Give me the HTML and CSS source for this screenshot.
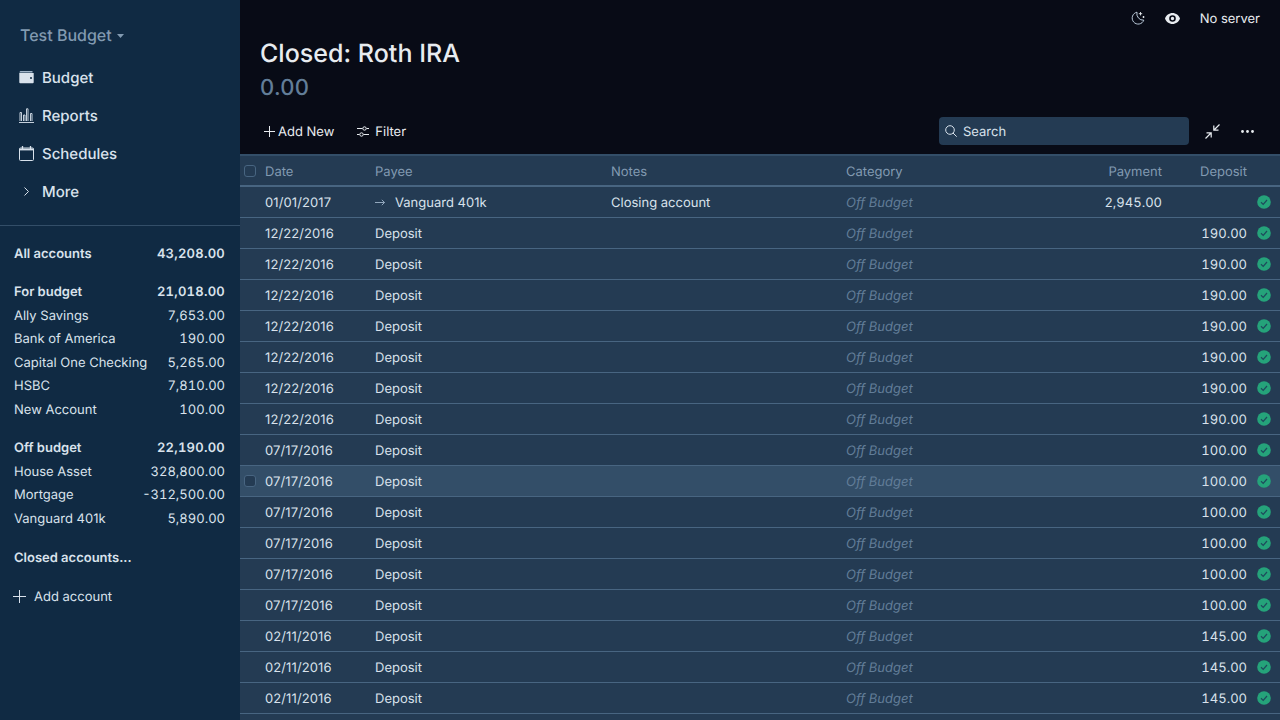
FILE: index.html
```html
<!DOCTYPE html>
<html lang="en">
<head>
<meta charset="utf-8">
<title>Closed: Roth IRA</title>
<link rel="stylesheet" href="styles.css">
</head>
<body>
<svg class="defs" width="0" height="0"><symbol id="ok" viewBox="0 0 14 14"><circle cx="7" cy="7" r="6.800" fill="#25a37a"/><path d="M4 7.300l2.200 2.100 3.800-4.400" fill="none" stroke="#1f4a5c" stroke-width="1.200"/></symbol></svg>
<div class="app">
  <aside class="sidebar">
    <div class="budget-name">Test Budget <svg class="caret" width="7" height="4" viewBox="0 0 7 4"><path d="M0 0h7L3.500 4z" fill="currentColor"/></svg></div>
    <nav class="nav">
      <div class="nav-item"><span class="nav-icon"><svg width="15" height="15" viewBox="0 0 15 15"><path d="M1.800 1h11.700v1.400H.5C.6 1.600 1.100 1 1.800 1z" fill="#9fb3c8"/><path d="M.3 3h14.400v9.300a.9.900 0 0 1-.9.900H1.200a.9.900 0 0 1-.9-.9z" fill="currentColor"/><circle cx="12" cy="8" r="1" fill="#102a43"/></svg></span>Budget</div>
      <div class="nav-item"><span class="nav-icon"><svg width="15" height="15" viewBox="0 0 15 15" fill="none" stroke="currentColor" stroke-width=".9"><path d="M0 14.500h15"/><path d="M1 13V4.500h1.500V13M4.500 13V7h1.500v6M7.500 13V.8H9V13M11.500 13V5.500H13V13" stroke-width=".9"/></svg></span>Reports</div>
      <div class="nav-item"><span class="nav-icon"><svg width="15" height="15" viewBox="0 0 15 15" fill="none" stroke="currentColor" stroke-width="1"><rect x=".5" y="2" width="14" height="12.500" rx="1"/><path d="M.5 3.500h14" stroke-width="1.800"/><path d="M3.500 0v3M11.500 0v3" stroke-width="1.300"/></svg></span>Schedules</div>
      <div class="nav-item"><span class="nav-icon"><svg width="15" height="15" viewBox="0 0 15 15" fill="none" stroke="currentColor" stroke-width="1"><path d="M5.500 3.500l4 4-4 4"/></svg></span>More</div>
    </nav>
    <div class="accounts">
      <div class="acct bold"><span>All accounts</span><span class="amt">43,208.00</span></div>
      <div class="group">
        <div class="acct bold"><span>For budget</span><span class="amt">21,018.00</span></div>
        <div class="acct"><span>Ally Savings</span><span class="amt">7,653.00</span></div>
        <div class="acct"><span>Bank of America</span><span class="amt">190.00</span></div>
        <div class="acct"><span>Capital One Checking</span><span class="amt">5,265.00</span></div>
        <div class="acct"><span>HSBC</span><span class="amt">7,810.00</span></div>
        <div class="acct"><span>New Account</span><span class="amt">100.00</span></div>
      </div>
      <div class="group">
        <div class="acct bold"><span>Off budget</span><span class="amt">22,190.00</span></div>
        <div class="acct"><span>House Asset</span><span class="amt">328,800.00</span></div>
        <div class="acct"><span>Mortgage</span><span class="amt">-312,500.00</span></div>
        <div class="acct"><span>Vanguard 401k</span><span class="amt">5,890.00</span></div>
      </div>
      <div class="group closed"><div class="acct bold"><span>Closed accounts...</span></div></div>
      <div class="add-account"><svg width="13" height="13" viewBox="0 0 13 13" stroke="currentColor" stroke-width="1"><path d="M6.500 0v13M0 6.500h13"/></svg><span>Add account</span></div>
    </div>
  </aside>
  <main class="main">
    <div class="topbar">
      <svg class="moon" width="14" height="14" viewBox="0 0 14 14" fill="none" stroke="currentColor" stroke-width="1"><path d="M6 1.200a6 6 0 1 0 6.800 8A6.500 6.500 0 0 1 6 1.200z"/><path d="M9.500 1v3.400M7.800 2.700h3.400M12.500 5v2M11.500 6h2" stroke="#e8ecf0" stroke-width=".9"/></svg>
      <svg class="eye" width="15" height="11" viewBox="0 0 15 11"><path fill-rule="evenodd" d="M7.500 0C11 0 13.800 2.300 15 5.500 13.800 8.700 11 11 7.500 11S1.200 8.700 0 5.500C1.200 2.300 4 0 7.500 0zm0 2.200a3.300 3.300 0 1 0 0 6.600 3.300 3.300 0 0 0 0-6.600zm0 1.600a1.700 1.700 0 1 1 0 3.400 1.700 1.700 0 0 1 0-3.400z" fill="currentColor"/></svg>
      <span class="server lbl">No server</span>
    </div>
    <header class="head">
      <h1 class="title">Closed: Roth IRA</h1>
      <div class="balance">0.00</div>
    </header>
    <div class="toolbar">
      <div class="tool add"><svg width="11" height="11" viewBox="0 0 11 11" stroke="currentColor" stroke-width="1"><path d="M5.500 0v11M0 5.500h11"/></svg><span class="lbl">Add New</span></div>
      <div class="tool filter"><svg width="12" height="11" viewBox="0 0 12 11" fill="none" stroke="currentColor" stroke-width="1"><path d="M0 2.500h5.500M9.500 2.500H12M0 8.500h2.500M6.500 8.500H12"/><circle cx="7.500" cy="2.500" r="1.700"/><circle cx="4.500" cy="8.500" r="1.700"/></svg><span class="lbl">Filter</span></div>
      <div class="spacer"></div>
      <div class="search"><svg width="12" height="12" viewBox="0 0 12 12" fill="none" stroke="currentColor" stroke-width="1"><circle cx="5" cy="5" r="4.300"/><path d="M8 8l3.700 3.700"/></svg><span class="lbl">Search</span></div>
      <svg class="compress" width="15" height="15" viewBox="0 0 15 15" fill="none" stroke="currentColor" stroke-width="1.200"><path d="M14.500.5L9 6M8.800 1.500v4.700h4.700M.5 14.500L6 9M1.500 8.800h4.700v4.700"/></svg>
      <svg class="dots" width="13" height="3" viewBox="0 0 13 3"><circle cx="1.500" cy="1.500" r="1.400" fill="currentColor"/><circle cx="6.500" cy="1.500" r="1.400" fill="currentColor"/><circle cx="11.500" cy="1.500" r="1.400" fill="currentColor"/></svg>
    </div>
    <div class="table">
      <div class="row header">
        <div class="c-check"><span class="box"></span></div>
        <div class="c-date">Date</div>
        <div class="c-payee">Payee</div>
        <div class="c-notes">Notes</div>
        <div class="c-cat">Category</div>
        <div class="c-pay">Payment</div>
        <div class="c-dep">Deposit</div>
        <div class="c-clr"></div>
      </div>
      <div class="row"><div class="c-check"></div><div class="c-date">01/01/2017</div><div class="c-payee"><svg class="arrow" width="10" height="7" viewBox="0 0 10 7" fill="none" stroke="currentColor" stroke-width=".9"><path d="M0 3.500h9.500M6.800.8l2.700 2.700-2.700 2.700"/></svg>Vanguard 401k</div><div class="c-notes">Closing account</div><div class="c-cat">Off Budget</div><div class="c-pay">2,945.00</div><div class="c-dep"></div><div class="c-clr"><svg class="ok" width="14" height="14"><use href="#ok"/></svg></div></div>
      <div class="row"><div class="c-check"></div><div class="c-date">12/22/2016</div><div class="c-payee">Deposit</div><div class="c-notes"></div><div class="c-cat">Off Budget</div><div class="c-pay"></div><div class="c-dep">190.00</div><div class="c-clr"><svg class="ok" width="14" height="14"><use href="#ok"/></svg></div></div>
      <div class="row"><div class="c-check"></div><div class="c-date">12/22/2016</div><div class="c-payee">Deposit</div><div class="c-notes"></div><div class="c-cat">Off Budget</div><div class="c-pay"></div><div class="c-dep">190.00</div><div class="c-clr"><svg class="ok" width="14" height="14"><use href="#ok"/></svg></div></div>
      <div class="row"><div class="c-check"></div><div class="c-date">12/22/2016</div><div class="c-payee">Deposit</div><div class="c-notes"></div><div class="c-cat">Off Budget</div><div class="c-pay"></div><div class="c-dep">190.00</div><div class="c-clr"><svg class="ok" width="14" height="14"><use href="#ok"/></svg></div></div>
      <div class="row"><div class="c-check"></div><div class="c-date">12/22/2016</div><div class="c-payee">Deposit</div><div class="c-notes"></div><div class="c-cat">Off Budget</div><div class="c-pay"></div><div class="c-dep">190.00</div><div class="c-clr"><svg class="ok" width="14" height="14"><use href="#ok"/></svg></div></div>
      <div class="row"><div class="c-check"></div><div class="c-date">12/22/2016</div><div class="c-payee">Deposit</div><div class="c-notes"></div><div class="c-cat">Off Budget</div><div class="c-pay"></div><div class="c-dep">190.00</div><div class="c-clr"><svg class="ok" width="14" height="14"><use href="#ok"/></svg></div></div>
      <div class="row"><div class="c-check"></div><div class="c-date">12/22/2016</div><div class="c-payee">Deposit</div><div class="c-notes"></div><div class="c-cat">Off Budget</div><div class="c-pay"></div><div class="c-dep">190.00</div><div class="c-clr"><svg class="ok" width="14" height="14"><use href="#ok"/></svg></div></div>
      <div class="row"><div class="c-check"></div><div class="c-date">12/22/2016</div><div class="c-payee">Deposit</div><div class="c-notes"></div><div class="c-cat">Off Budget</div><div class="c-pay"></div><div class="c-dep">190.00</div><div class="c-clr"><svg class="ok" width="14" height="14"><use href="#ok"/></svg></div></div>
      <div class="row"><div class="c-check"></div><div class="c-date">07/17/2016</div><div class="c-payee">Deposit</div><div class="c-notes"></div><div class="c-cat">Off Budget</div><div class="c-pay"></div><div class="c-dep">100.00</div><div class="c-clr"><svg class="ok" width="14" height="14"><use href="#ok"/></svg></div></div>
      <div class="row hover"><div class="c-check"><span class="box"></span></div><div class="c-date">07/17/2016</div><div class="c-payee">Deposit</div><div class="c-notes"></div><div class="c-cat">Off Budget</div><div class="c-pay"></div><div class="c-dep">100.00</div><div class="c-clr"><svg class="ok" width="14" height="14"><use href="#ok"/></svg></div></div>
      <div class="row"><div class="c-check"></div><div class="c-date">07/17/2016</div><div class="c-payee">Deposit</div><div class="c-notes"></div><div class="c-cat">Off Budget</div><div class="c-pay"></div><div class="c-dep">100.00</div><div class="c-clr"><svg class="ok" width="14" height="14"><use href="#ok"/></svg></div></div>
      <div class="row"><div class="c-check"></div><div class="c-date">07/17/2016</div><div class="c-payee">Deposit</div><div class="c-notes"></div><div class="c-cat">Off Budget</div><div class="c-pay"></div><div class="c-dep">100.00</div><div class="c-clr"><svg class="ok" width="14" height="14"><use href="#ok"/></svg></div></div>
      <div class="row"><div class="c-check"></div><div class="c-date">07/17/2016</div><div class="c-payee">Deposit</div><div class="c-notes"></div><div class="c-cat">Off Budget</div><div class="c-pay"></div><div class="c-dep">100.00</div><div class="c-clr"><svg class="ok" width="14" height="14"><use href="#ok"/></svg></div></div>
      <div class="row"><div class="c-check"></div><div class="c-date">07/17/2016</div><div class="c-payee">Deposit</div><div class="c-notes"></div><div class="c-cat">Off Budget</div><div class="c-pay"></div><div class="c-dep">100.00</div><div class="c-clr"><svg class="ok" width="14" height="14"><use href="#ok"/></svg></div></div>
      <div class="row"><div class="c-check"></div><div class="c-date">02/11/2016</div><div class="c-payee">Deposit</div><div class="c-notes"></div><div class="c-cat">Off Budget</div><div class="c-pay"></div><div class="c-dep">145.00</div><div class="c-clr"><svg class="ok" width="14" height="14"><use href="#ok"/></svg></div></div>
      <div class="row"><div class="c-check"></div><div class="c-date">02/11/2016</div><div class="c-payee">Deposit</div><div class="c-notes"></div><div class="c-cat">Off Budget</div><div class="c-pay"></div><div class="c-dep">145.00</div><div class="c-clr"><svg class="ok" width="14" height="14"><use href="#ok"/></svg></div></div>
      <div class="row"><div class="c-check"></div><div class="c-date">02/11/2016</div><div class="c-payee">Deposit</div><div class="c-notes"></div><div class="c-cat">Off Budget</div><div class="c-pay"></div><div class="c-dep">145.00</div><div class="c-clr"><svg class="ok" width="14" height="14"><use href="#ok"/></svg></div></div>
    </div>
  </main>
</div>
</body>
</html>
```

FILE: styles.css
```css
* { box-sizing: border-box; }
html, body { margin: 0; height: 100%; overflow: hidden; }
body { font-family: Inter, "Liberation Sans", sans-serif; font-size: 13px; color: #e8ecf0; background: #080b16; text-rendering: geometricPrecision; }
.defs { position: absolute; }
.app { display: flex; height: 720px; }
.lbl { display: block; padding-top: 1px; }

.sidebar { width: 240px; flex: none; background: #102a43; color: #d9e2ec; display: flex; flex-direction: column; }
.budget-name { padding: 25px 0 0 20px; height: 58px; font-size: 16px; line-height: 20px; font-weight: 500; color: #829ab1; }
.caret { margin-left: 1px; vertical-align: 3px; }
.nav { display: flex; flex-direction: column; padding-bottom: 14px; border-bottom: 1px solid #334e68; height: 168px; }
.nav-item { display: flex; align-items: center; height: 38px; padding-left: 19px; font-size: 15px; font-weight: 500; color: #d9e2ec; }
.nav-icon { width: 23px; display: flex; }
.accounts { display: flex; flex-direction: column; padding: 16px 15px 0 14px; }
.acct { display: flex; justify-content: space-between; height: 23.500px; padding-top: 1px; line-height: 23px; font-size: 13px; }
.amt { font-feature-settings: "tnum"; }
.acct.bold { font-weight: 600; }
.acct.bold .amt { letter-spacing: .25px; }
.group { margin-top: 14.750px; }
.group.closed { margin-top: 16px; }
.add-account { display: flex; align-items: center; gap: 8px; margin-top: 15px; height: 24px; margin-left: -1px; }
.add-account svg { flex: none; }

.main { flex: 1; min-width: 0; display: flex; flex-direction: column; }
.topbar { display: flex; align-items: center; justify-content: flex-end; height: 36px; padding-right: 20px; color: #bcccdc; }
.moon { margin-right: 20px; }
.eye { margin-right: 20px; color: #e8ecf0; }
.server { color: #e8ecf0; }
.head { padding: 1px 0 0 20px; }
.title { margin: 0; font-size: 25px; font-weight: 500; line-height: 34px; letter-spacing: .03px; color: #e8ecf0; }
.balance { margin-top: 1px; font-size: 22px; line-height: 32px; font-weight: 500; color: #627d98; letter-spacing: .3px; }
.toolbar { display: flex; align-items: center; height: 28px; margin-top: 13px; padding-left: 24px; padding-right: 26px; }
.tool { display: flex; align-items: center; }
.add svg { margin-right: 3px; }
.filter { margin-left: 23px; }
.filter svg { margin-right: 6px; }
.spacer { flex: 1; }
.search { width: 250px; height: 28px; background: #243b53; border-radius: 4px; display: flex; align-items: center; padding-left: 6px; gap: 6px; color: #d9e2ec; }
.compress { margin-left: 16px; }
.dots { margin-left: 21px; }

.table { margin-top: 9px; flex: 1; background: #243b53; border-top: 2px solid #334e68; overflow: hidden; }
.row { display: flex; align-items: center; height: 31px; padding-top: 1px; border-bottom: 1px solid #486581; color: #d9e2ec; }
.row.header { height: 31px; padding-top: 2px; color: #829ab1; border-bottom: 2px solid #486581; }
.row.hover { background: #334e68; }
.c-check { width: 25px; flex: none; padding-left: 4px; display: flex; margin-top: -1px; }
.box { width: 12px; height: 12px; border: 1px solid #486581; border-radius: 3px; background: #243b53; }
.c-date { width: 110px; flex: none; letter-spacing: .1px; }
.header .c-date { letter-spacing: 0; }
.c-payee { width: 236px; flex: none; display: flex; align-items: center; }
.arrow { color: #9fb3c8; margin-right: 10px; }
.c-notes { width: 235px; flex: none; }
.c-cat { width: 180px; flex: none; font-style: italic; color: #627d98; }
.header .c-cat { font-style: normal; color: #829ab1; }
.c-pay { width: 136px; flex: none; text-align: right; font-feature-settings: "tnum"; }
.c-dep { width: 85px; flex: none; text-align: right; font-feature-settings: "tnum"; }
.c-clr { flex: 1; display: flex; justify-content: flex-end; padding-right: 9px; margin-top: -1px; }
```
